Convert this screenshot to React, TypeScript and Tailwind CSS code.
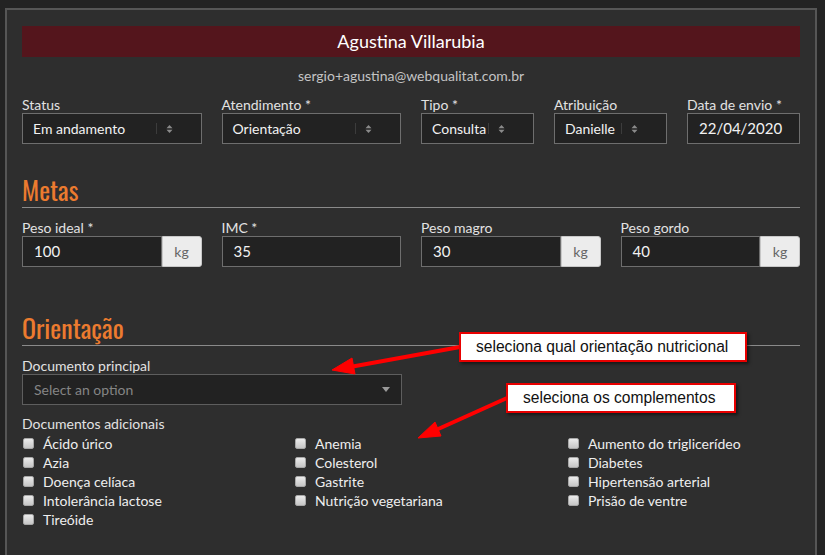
import React from "react";

const SelectArrows = () => (
  <svg width="7" height="10" viewBox="0 0 7 10" className="fill-[#8a8a8a]">
    <path d="M3.5 1L6.5 4.3H0.5Z" />
    <path d="M0.5 5.7H6.5L3.5 9Z" />
  </svg>
);

const Field: React.FC<{ label: string; required?: boolean; children: React.ReactNode }> = ({ label, required, children }) => (
  <div className="flex flex-col">
    <label className="h-4 text-[14px] leading-4 text-[#e2e2e2]">
      {label}
      {required && " *"}
    </label>
    {children}
  </div>
);

const FakeSelect: React.FC<{ value: string }> = ({ value }) => (
  <div className="flex h-[31px] items-center border border-[#6e6e6e] bg-[#222222] pl-[10px] text-[14px] text-[#f2f2f2]">
    <span className="flex-1 whitespace-nowrap">{value}</span>
    <span className="mr-[9px] h-[11px] w-px bg-[#3c3c3c]" />
    <span className="mr-[28px] flex">
      <SelectArrows />
    </span>
  </div>
);

const TextBox: React.FC<{ value: string; unit?: boolean }> = ({ value, unit }) => (
  <div className="flex h-[31px]">
    <div className="flex flex-1 items-center border border-[#6e6e6e] bg-[#222222] pl-[11px] text-[15px] text-[#f2f2f2]">{value}</div>
    {unit && (
      <div className="flex w-[40px] items-center justify-center rounded-r-[3px] border border-[#c8c8c8] bg-[#ececec] text-[14px] text-[#666666]">
        kg
      </div>
    )}
  </div>
);

const SectionTitle: React.FC<{ title: string; className?: string }> = ({ title, className }) => (
  <div className={"border-b border-[#8a8a8a] " + (className ?? "")}>
    <h2 className="h-[35px] text-[26px] leading-[35px] text-[#ec7b2f] font-['Oswald','DejaVu_Sans_Condensed','Liberation_Sans_Narrow',sans-serif] [font-stretch:condensed]">
      {title}
    </h2>
  </div>
);

const Check: React.FC<{ label: string }> = ({ label }) => (
  <div className="flex h-[19px] items-center">
    <span className="ml-px h-[11px] w-[11px] rounded-[2px] border border-[#a8a8a8] bg-gradient-to-b from-[#ebebeb] to-[#c6c6c6]" />
    <span className="ml-[9px] text-[14px] text-[#eeeeee]">{label}</span>
  </div>
);

const col1 = ["Ácido úrico", "Azia", "Doença celíaca", "Intolerância lactose", "Tireóide"];
const col2 = ["Anemia", "Colesterol", "Gastrite", "Nutrição vegetariana"];
const col3 = ["Aumento do triglicerídeo", "Diabetes", "Hipertensão arterial", "Prisão de ventre"];

export default function App() {
  return (
    <div className="relative h-[555px] w-[825px] overflow-hidden bg-[#232323] pl-[5px] pt-[8px] font-['Lato',sans-serif]">
      <div className="h-[560px] w-[812px] border-2 border-[#565656] bg-[#2e2e2e] px-[15px] pt-[16px]">
        <div className="flex h-[31px] items-center justify-center bg-[#54151c] text-[18px] text-white">Agustina Villarubia</div>
        <div className="mt-[10px] h-[18px] text-center text-[14px] leading-[18px] text-[#c4c4c4]">sergio+agustina@webqualitat.com.br</div>

        <div className="mt-[12px] grid grid-cols-[1fr_1fr_113px_113px_113px] gap-x-[20px]">
          <Field label="Status">
            <FakeSelect value="Em andamento" />
          </Field>
          <Field label="Atendimento" required>
            <FakeSelect value="Orientação" />
          </Field>
          <Field label="Tipo" required>
            <FakeSelect value="Consulta" />
          </Field>
          <Field label="Atribuição">
            <FakeSelect value="Danielle" />
          </Field>
          <Field label="Data de envio" required>
            <TextBox value="22/04/2020" />
          </Field>
        </div>

        <SectionTitle title="Metas" className="mt-[28px]" />

        <div className="mt-[12px] grid grid-cols-4 gap-x-[20px]">
          <Field label="Peso ideal" required>
            <TextBox value="100" unit />
          </Field>
          <Field label="IMC" required>
            <TextBox value="35" />
          </Field>
          <Field label="Peso magro">
            <TextBox value="30" unit />
          </Field>
          <Field label="Peso gordo">
            <TextBox value="40" unit />
          </Field>
        </div>

        <SectionTitle title="Orientação" className="mt-[43px]" />

        <div className="mt-[12px] w-[380px]">
          <Field label="Documento principal">
            <div className="flex h-[31px] items-center border border-[#5e5e5e] bg-[#222222] pl-[11px] pr-[11px] text-[14px] text-[#858585]">
              <span className="flex-1">Select an option</span>
              <svg width="8" height="5" viewBox="0 0 8 5" className="fill-[#9a9a9a]">
                <path d="M0 0H8L4 5Z" />
              </svg>
            </div>
          </Field>
        </div>

        <div className="mt-[11px] h-4 text-[14px] leading-4 text-[#e2e2e2]">Documentos adicionais</div>
        <div className="mt-[2px] grid grid-cols-[272px_273px_1fr]">
          <div>{col1.map((l) => <Check key={l} label={l} />)}</div>
          <div>{col2.map((l) => <Check key={l} label={l} />)}</div>
          <div>{col3.map((l) => <Check key={l} label={l} />)}</div>
        </div>
      </div>

      <svg className="pointer-events-none absolute left-0 top-0" width="825" height="555" viewBox="0 0 825 555">
        <g fill="#ff0000" stroke="#ff0000" strokeLinejoin="round">
          <line x1="460" y1="347" x2="350" y2="367" strokeWidth="4" />
          <polygon points="332,370 352,358 355,374" strokeWidth="1" />
          <line x1="507" y1="398" x2="436" y2="430" strokeWidth="4" />
          <polygon points="418,438 435,422 441,436" strokeWidth="1" />
        </g>
      </svg>

      <div className="absolute left-[459px] top-[332px] flex h-[30px] w-[288px] items-center border-2 border-[#e80000] bg-white pl-[15px] text-[15.6px] text-[#111] shadow-[2px_2px_3px_rgba(0,0,0,0.5)] font-['Liberation_Sans',Arial,sans-serif]">
        seleciona qual orientação nutricional
      </div>
      <div className="absolute left-[506px] top-[383px] flex h-[30px] w-[230px] items-center border-2 border-[#e80000] bg-white pl-[15px] text-[15.6px] text-[#111] shadow-[2px_2px_3px_rgba(0,0,0,0.5)] font-['Liberation_Sans',Arial,sans-serif]">
        seleciona os complementos
      </div>
    </div>
  );
}
